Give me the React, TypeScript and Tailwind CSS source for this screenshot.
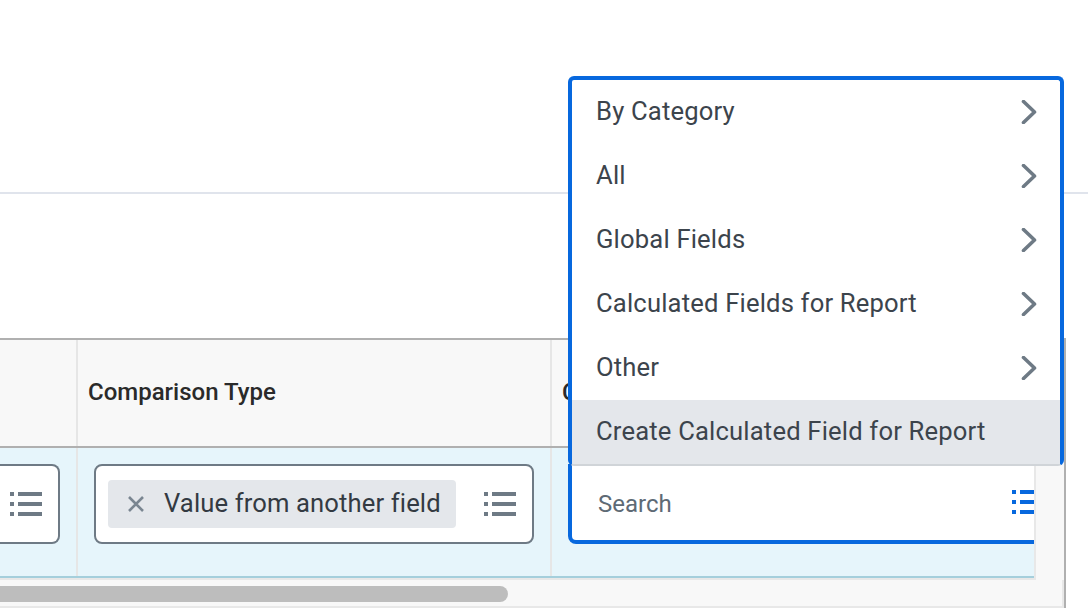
import React from "react";

function ListIcon({ color }: { color: string }) {
  return (
    <svg width="32" height="24" viewBox="0 0 32 24" className="shrink-0" fill={color}>
      <rect x="0" y="0" width="4" height="4" />
      <rect x="0" y="10" width="4" height="4" />
      <rect x="0" y="20" width="4" height="4" />
      <rect x="8" y="0" width="24" height="4" />
      <rect x="8" y="10" width="24" height="4" />
      <rect x="8" y="20" width="24" height="4" />
    </svg>
  );
}

function Chevron() {
  return (
    <svg width="16" height="24" viewBox="0 0 16 24" fill="none" stroke="#6e7a85" strokeWidth="3.6" strokeLinecap="round" strokeLinejoin="round">
      <path d="M2.5 1.5 L13.5 12 L2.5 22.5" />
    </svg>
  );
}

const items = ["By Category", "All", "Global Fields", "Calculated Fields for Report", "Other"];

export default function App() {
  return (
    <div className="relative w-[1088px] h-[608px] overflow-hidden bg-white font-['Roboto',sans-serif]">
      <div className="h-[194px] border-b-2 border-[#e0e4ec]" />
      <div className="h-[144px]" />

      <div className="w-[1066px] h-[270px] flex flex-col border-t-2 border-r-2 border-[#b0b0b0] bg-[#f8f8f8]">
        <div className="flex h-[108px] shrink-0 border-b-2 border-[#b0b0b0]">
          <div className="w-[78px] shrink-0 border-r-2 border-[#e6e6e6]" />
          <div className="w-[474px] shrink-0 border-r-2 border-[#e6e6e6] flex items-center pl-[10px] pb-[2px] text-[24px] font-medium text-[#2a2a2a]">
            Comparison Type
          </div>
          <div className="w-[16px] shrink-0 overflow-hidden flex items-center pl-[10px] pb-[2px] text-[24px] font-medium text-[#2a2a2a] whitespace-nowrap">
            Comparison Value
          </div>
        </div>

        <div className="flex w-[1036px] h-[132px] shrink-0 border-r-2 border-b-2 border-[#e8e8e8]">
          <div className="flex flex-1 min-w-0 bg-[#e6f5fb] border-b-2 border-[#a5cfdc] overflow-hidden">
            <div className="w-[78px] shrink-0 border-r-2 border-[#e6e6e6] pt-[16px]">
              <div className="h-[80px] w-[60px] bg-white border-2 border-l-0 border-[#6e7a85] rounded-r-[8px] flex items-center pl-[10px]">
                <ListIcon color="#6e7a85" />
              </div>
            </div>
            <div className="w-[474px] shrink-0 border-r-2 border-[#e6e6e6] pt-[16px] pl-[16px]">
              <div className="h-[80px] w-[440px] bg-white border-2 border-[#6e7a85] rounded-[8px] flex items-center pl-[12px] pr-[16px] justify-between">
                <div className="h-[48px] w-[348px] bg-[#e4e7eb] rounded-[4px] flex items-center pl-[19px]">
                  <svg width="18" height="18" viewBox="0 0 18 18" fill="none" stroke="#7a8691" strokeWidth="2.6" className="shrink-0">
                    <path d="M2 2 L16 16 M16 2 L2 16" />
                  </svg>
                  <span className="ml-[19px] pb-[2px] text-[25.6px] tracking-[0.13px] text-[#333a42] whitespace-nowrap">Value from another field</span>
                </div>
                <ListIcon color="#6e7a85" />
              </div>
            </div>
            <div className="flex-1 min-w-0 overflow-hidden pt-[16px] pl-[16px]">
              <div className="h-[80px] w-[496px] bg-white border-4 border-t-0 border-[#0768de] rounded-b-[8px] flex items-center justify-between pl-[26px] pr-[16px]">
                <span className="pt-[4px] text-[24px] text-[#5e6a75]">Search</span>
                <ListIcon color="#0768de" />
              </div>
            </div>
          </div>
        </div>

        <div className="flex-1 pt-[6px] border-b-2 border-r-2 border-[#e8e8e8]">
          <div className="h-[16px] w-[508px] rounded-r-full bg-[#bdbdbd]" />
        </div>
      </div>

      <div className="absolute left-[568px] top-[76px] w-[496px] bg-white border-x-4 border-t-4 border-b-2 border-[#0768de] border-b-[#d0d4d8] rounded-[6px]">
        {items.map((t) => (
          <div key={t} className="h-[64px] flex items-center justify-between pl-[24px] pr-[23px] text-[25.6px] tracking-[0.18px] text-[#3c444c]">
            <span className="pb-[2px]">{t}</span>
            <Chevron />
          </div>
        ))}
        <div className="h-[64px] flex items-center pl-[24px] bg-[#e4e7eb] text-[25.6px] tracking-[0.18px] text-[#3c444c]">
          <span className="pb-[2px]">Create Calculated Field for Report</span>
        </div>
      </div>
    </div>
  );
}
